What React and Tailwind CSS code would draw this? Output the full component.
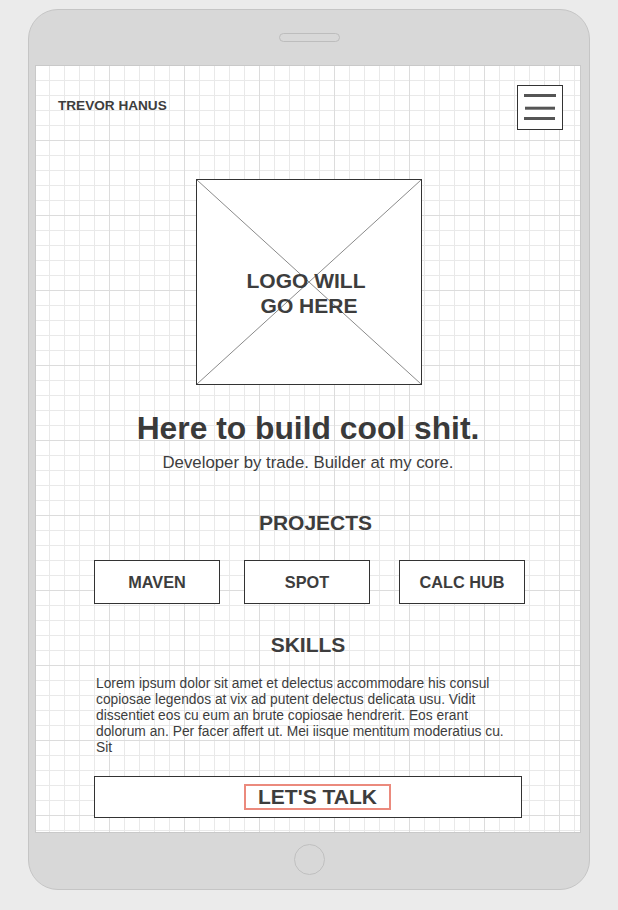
// App.jsx
const font = "font-['Liberation_Sans',Arial,sans-serif]";

// ── Hamburger button ─────────────────────────────────────────
function MenuButton() {
  return (
    <div className="w-[46px] h-[45px] border border-[#333] bg-white">
      <svg width="44" height="43" viewBox="0 0 44 43">
        <rect x="6" y="8" width="32" height="3" fill="#555" />
        <rect x="7" y="20.7" width="30" height="3" fill="#555" />
        <rect x="6" y="31" width="31" height="3" fill="#555" />
      </svg>
    </div>
  );
}

// ── Logo placeholder ─────────────────────────────────────────
function LogoBox() {
  return (
    <div className="relative ml-[160px] mt-[49px] w-[226px] h-[206px] border border-[#333] bg-white">
      <svg className="absolute inset-0 w-full h-full" viewBox="0 0 224 204" preserveAspectRatio="none">
        <line x1="0" y1="0" x2="224" y2="204" stroke="#8a8a8a" strokeWidth="1" />
        <line x1="224" y1="0" x2="0" y2="204" stroke="#8a8a8a" strokeWidth="1" />
      </svg>
      <div className="relative flex flex-col items-center pt-[88px] text-[21px] leading-[25px] font-bold text-[#3d3d3d]">
        <span className="pr-[6px]">LOGO WILL</span>
        <span>GO HERE</span>
      </div>
    </div>
  );
}

function ProjectButton({ label, className = "" }) {
  return (
    <div className={`w-[126px] h-[44px] border border-[#333] bg-white flex items-center justify-center text-[16.3px] font-bold text-[#3d3d3d] ${className}`}>
      {label}
    </div>
  );
}

// ── Screen content ───────────────────────────────────────────
function Screen() {
  return (
    <div className="ml-[6px] w-[546px] h-[768px] border border-[#c9c9c9] overflow-hidden">
      <div className="h-full bg-white [background-image:linear-gradient(to_right,#dcdcdc_1px,transparent_1px),linear-gradient(to_bottom,#dcdcdc_1px,transparent_1px),linear-gradient(to_right,#e9e9e9_1px,transparent_1px),linear-gradient(to_bottom,#e9e9e9_1px,transparent_1px)] [background-size:75px_75px,75px_75px,15px_15px,15px_15px] [background-position:73px_0,0_74px,13px_0,0_14px]">
        <header className="flex justify-between pl-[22px] pr-[17px]">
          <div className="mt-[32px] text-[13.6px] leading-[16px] font-bold text-[#3d3d3d]">TREVOR HANUS</div>
          <div className="mt-[19px]">
            <MenuButton />
          </div>
        </header>

        <LogoBox />

        <h1 className="mt-[25px] text-center text-[31.8px] leading-[36px] font-bold text-[#3a3a3a]">
          Here to build cool shit.
        </h1>
        <p className="mt-[7px] text-center text-[16.8px] leading-[20px] text-[#3d3d3d]">
          Developer by trade. Builder at my core.
        </p>

        <h2 className="mt-[38px] pl-[15px] text-center text-[21px] leading-[24px] font-bold text-[#3d3d3d]">PROJECTS</h2>
        <div className="mt-[25px] flex pl-[58px]">
          <ProjectButton label="MAVEN" />
          <ProjectButton label="SPOT" className="ml-[24px]" />
          <ProjectButton label="CALC HUB" className="ml-[29px]" />
        </div>

        <h2 className="mt-[29px] text-center text-[21px] leading-[24px] font-bold text-[#3d3d3d]">SKILLS</h2>
        <p className="mt-[19px] ml-[60px] w-[418px] text-[13.8px] leading-[16px] text-[#3d3d3d]">
          Lorem ipsum dolor sit amet et delectus accommodare his consul copiosae legendos at vix ad putent delectus
          delicata usu. Vidit dissentiet eos cu eum an brute copiosae hendrerit. Eos erant dolorum an. Per facer
          affert ut. Mei iisque mentitum moderatius cu. Sit
        </p>

        <div className="mt-[20px] ml-[58px] w-[428px] h-[42px] border border-[#333] bg-white flex items-center justify-center">
          <span className="ml-[19px] px-[12px] border-2 border-[#eb8a7d] text-[21px] leading-[22px] font-bold text-[#3d3d3d]">
            LET'S TALK
          </span>
        </div>
      </div>
    </div>
  );
}

// ── App root ──────────────────────────────────────────────────
export default function App() {
  return (
    <div className={`min-h-screen bg-[#ebebeb] flex justify-center pt-[9px] ${font}`}>
      <div className="w-[562px] h-[881px] rounded-[30px] border border-[#c5c5c5] bg-[#d8d8d8] flex flex-col">
        <div className="h-[55px] flex justify-center">
          <div className="mt-[23px] w-[61px] h-[9px] rounded-full border border-[#bdbdbd]" />
        </div>
        <Screen />
        <div className="flex-1 flex justify-center">
          <div className="mt-[11px] w-[31px] h-[31px] rounded-full border-[1.5px] border-[#c0c0c0]" />
        </div>
      </div>
    </div>
  );
}
